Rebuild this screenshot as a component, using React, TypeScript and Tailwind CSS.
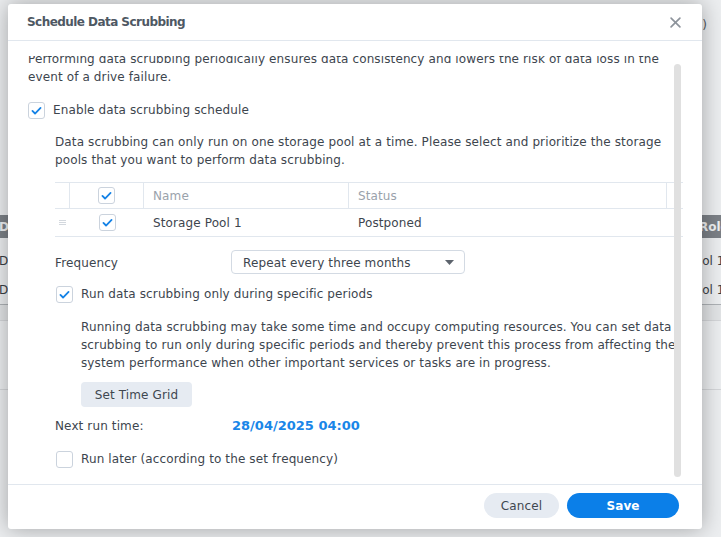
const font = { fontFamily: '"DejaVu Sans", Verdana, sans-serif' };

const Checkbox = ({ checked }: { checked: boolean }) => (
  <span className="flex h-[17px] w-[17px] shrink-0 items-center justify-center rounded-[3px] border border-[#cbd3dd] bg-white">
    {checked && (
      <svg className="h-[13px] w-[13px]" viewBox="0 0 16 16" fill="none">
        <path d="M3 8.5l3.2 3.2L13 4.8" stroke="#1482e6" strokeWidth={2.2} strokeLinecap="round" strokeLinejoin="round" />
      </svg>
    )}
  </span>
);

const CheckRow = ({ checked, label, className = '' }: { checked: boolean; label: string; className?: string }) => (
  <div className={`flex h-[18px] items-center gap-[8px] ${className}`}>
    <Checkbox checked={checked} />
    <span>{label}</span>
  </div>
);

const PageBehind = () => (
  <div className="text-[12px] text-[#3a3f45]">
    <div className="flex h-[215px] justify-end pr-[14px] pt-[16px] leading-[18px] text-[#555b62]">
      <span>1)</span>
    </div>
    <div className="flex h-[23px] items-center whitespace-nowrap bg-[#7c8187] font-bold text-[#eef0f2]">
      <span className="-ml-[1px]">D</span>
      <span className="ml-auto w-[22px]">Role</span>
    </div>
    <div className="mt-[8px]">
      {[0, 1].map((i) => (
        <div key={i} className="flex h-[29px] items-center whitespace-nowrap">
          <span className="-ml-[1px]">D</span>
          <span className="ml-auto w-[33px]">Pool 1</span>
        </div>
      ))}
    </div>
    <div className="h-[16px] border-t border-[#aeb2b6] bg-[#e2e4e6]" />
    <div className="h-[69px] border-t border-[#d4d6d9]" />
    <div className="border-t border-[#d4d6d9]" />
  </div>
);

export default function App() {
  return (
    <div className="relative h-[537px] w-[721px] overflow-hidden bg-[#eceef0]" style={font}>
      <PageBehind />

      <div className="absolute left-[8px] top-[4px] flex h-[525px] w-[694px] flex-col rounded-[3px] bg-white text-[12px] tracking-[0.12px] text-[#3d454e] shadow-[0_0_22px_rgba(0,0,0,0.32)]">
        <header className="flex h-[37px] shrink-0 items-center justify-between border-b border-[#e1e7ee] pl-[19px] pr-[21px]">
          <h1 className="text-[12px] font-bold tracking-[-0.55px] text-[#4e5863]">Schedule Data Scrubbing</h1>
          <svg className="h-[11px] w-[11px]" viewBox="0 0 10 10" fill="none">
            <path d="M1 1l8 8M9 1L1 9" stroke="#8d939b" strokeWidth={1.5} strokeLinecap="round" />
          </svg>
        </header>

        <div className="relative min-h-0 flex-1 pt-[15px]">
          <div className="h-full overflow-hidden pl-[20px] pr-[19px]">
            <div className="-mt-[6px] leading-[18px]">
              <p>
                Performing data scrubbing periodically ensures data consistency and lowers the risk of data loss in the event of a
                drive failure.
              </p>
              <CheckRow checked label="Enable data scrubbing schedule" className="mt-[15px]" />

              <div className="pl-[27px]">
                <p className="mt-[14px]">
                  Data scrubbing can only run on one storage pool at a time. Please select and prioritize the storage pools that
                  you want to perform data scrubbing.
                </p>

                <div className="mt-[13px] border-y border-[#e1e7ee]">
                  <div className="grid h-[26px] grid-cols-[15px_74px_205px_318px_1fr] border-b border-[#e1e7ee] text-[#9aa2ab]">
                    <div className="border-r border-[#e1e7ee]" />
                    <div className="flex items-center justify-center border-r border-[#e1e7ee]">
                      <Checkbox checked />
                    </div>
                    <div className="flex items-center border-r border-[#e1e7ee] pl-[9px]">Name</div>
                    <div className="flex items-center border-r border-[#e1e7ee] pl-[9px]">Status</div>
                    <div />
                  </div>
                  <div className="grid h-[27px] grid-cols-[15px_74px_205px_318px_1fr]">
                    <div className="flex flex-col justify-center gap-[1px] pl-[4px]">
                      <span className="h-px w-[7px] bg-[#d3d8de]" />
                      <span className="h-px w-[7px] bg-[#d3d8de]" />
                      <span className="h-px w-[7px] bg-[#d3d8de]" />
                    </div>
                    <div className="flex items-center justify-center">
                      <Checkbox checked />
                    </div>
                    <div className="flex items-center pl-[9px]">Storage Pool 1</div>
                    <div className="flex items-center pl-[9px]">Postponed</div>
                    <div />
                  </div>
                </div>

                <div className="mt-[13px] flex items-center">
                  <span className="w-[176px] pt-[1px]">Frequency</span>
                  <div className="flex h-[24px] w-[234px] items-center justify-between rounded-[4px] border border-[#d3dae3] pl-[11px] pr-[10px] pt-[1px]">
                    <span>Repeat every three months</span>
                    <svg className="h-[5px] w-[9px]" viewBox="0 0 9 5">
                      <path d="M0 0h9L4.5 5z" fill="#5d646d" />
                    </svg>
                  </div>
                </div>

                <CheckRow checked label="Run data scrubbing only during specific periods" className="mt-[11px] pl-[1px]" />

                <div className="pl-[26px]">
                  <p className="mt-[15px]">
                    Running data scrubbing may take some time and occupy computing resources. You can set data scrubbing to run
                    only during specific periods and thereby prevent this process from affecting the system performance when
                    other important services or tasks are in progress.
                  </p>
                  <button className="mt-[10px] h-[25px] w-[111px] rounded-[4px] bg-[#e6ebf2] text-[#3f4750]">Set Time Grid</button>
                </div>

                <div className="mt-[10px] flex h-[18px] items-center">
                  <span className="w-[177px]">Next run time:</span>
                  <span className="text-[13px] font-bold tracking-normal text-[#1a86e8]">28/04/2025 04:00</span>
                </div>

                <CheckRow checked={false} label="Run later (according to the set frequency)" className="mt-[15px] pl-[1px]" />
              </div>
            </div>
          </div>
          <div className="absolute left-[666px] top-[23px] h-[413px] w-[7px] rounded-full bg-[#e0e0e0]" />
        </div>

        <footer className="flex h-[45px] shrink-0 justify-end gap-[8px] border-t border-[#e1e7ee] pr-[23px] pt-[8px]">
          <button className="h-[25px] w-[75px] rounded-full bg-[#e6ebf2] text-[#3f4750]">Cancel</button>
          <button className="h-[25px] w-[112px] rounded-full bg-[#0b7fe8] font-bold text-white">Save</button>
        </footer>
      </div>
    </div>
  );
}
